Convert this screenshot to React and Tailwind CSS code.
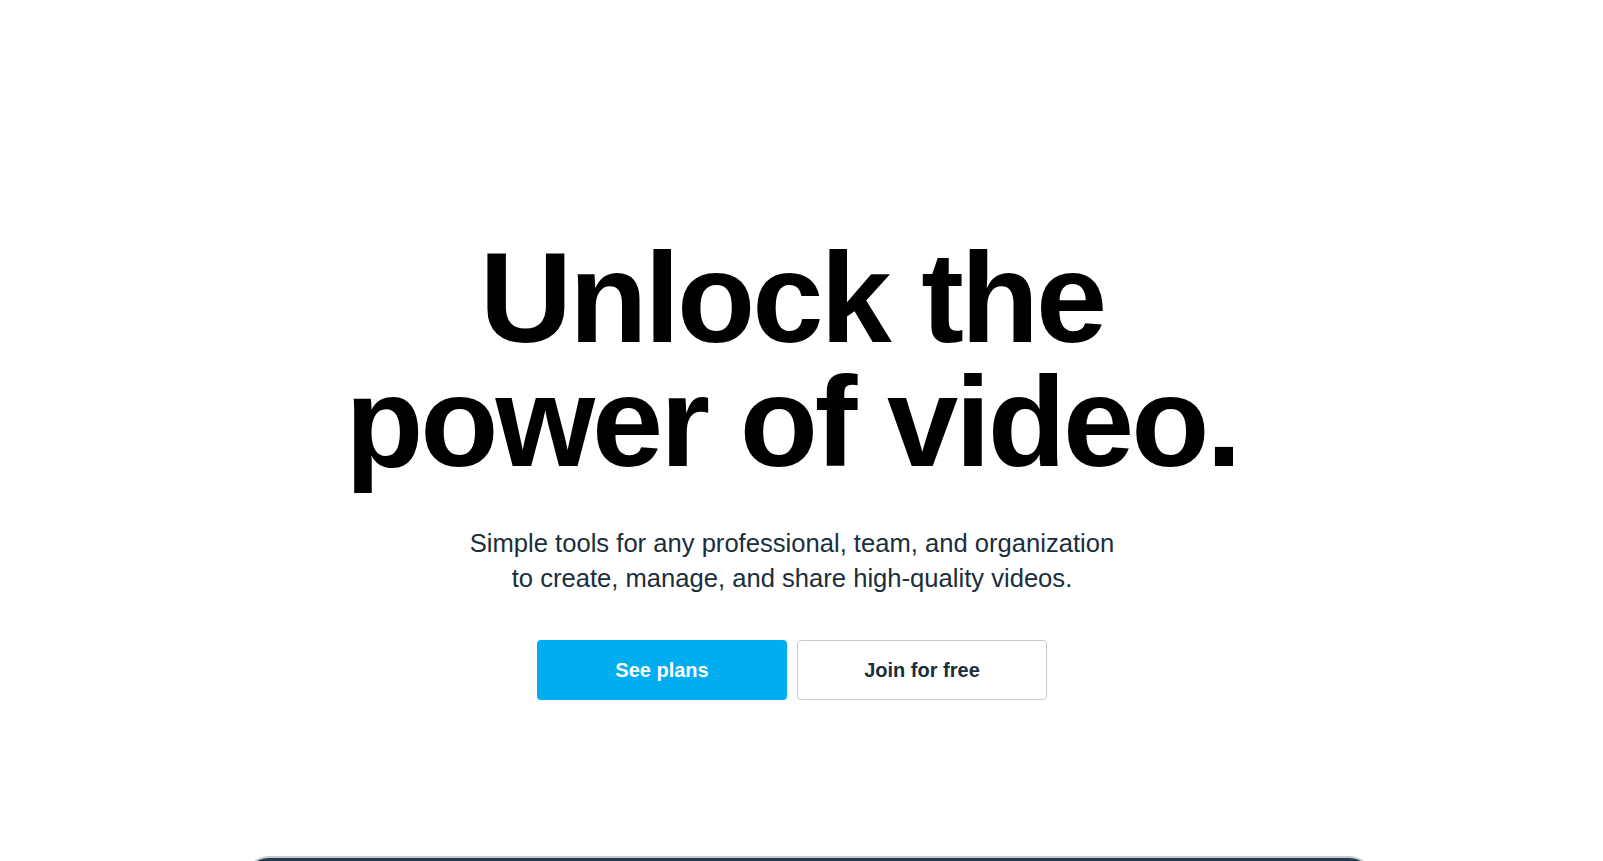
export default function App() {
  return (
    <div className="min-h-[861px] w-full bg-white overflow-hidden" style={{ fontFamily: '"Liberation Sans", Arial, sans-serif' }}>
      <section className="flex flex-col items-center pr-[19px] pt-[236px]">
        <h1 className="text-center text-[128px] leading-[124px] font-bold tracking-[-3px] text-black">
          Unlock the
          <br />
          power of video.
        </h1>
        <p className="mt-[42px] text-center text-[25.6px] leading-[35px] text-[#1a2e3b]">
          Simple tools for any professional, team, and organization
          <br />
          to create, manage, and share high-quality videos.
        </p>
        <div className="mt-[44px] flex gap-[10px]">
          <button className="flex h-[60px] w-[250px] items-center justify-center rounded-[4px] bg-[#00adef] text-[20px] font-bold text-white">
            See plans
          </button>
          <button className="flex h-[60px] w-[250px] items-center justify-center rounded-[4px] border border-[#c9ccce] bg-white text-[20px] font-bold text-[#1a2e3b]">
            Join for free
          </button>
        </div>
      </section>
      <div className="mt-[156px] ml-[245px] h-[40px] w-[1128px] rounded-t-[24px] border-t-2 border-[#c5cbd0] bg-[#1f3a4e]"></div>
    </div>
  );
}
